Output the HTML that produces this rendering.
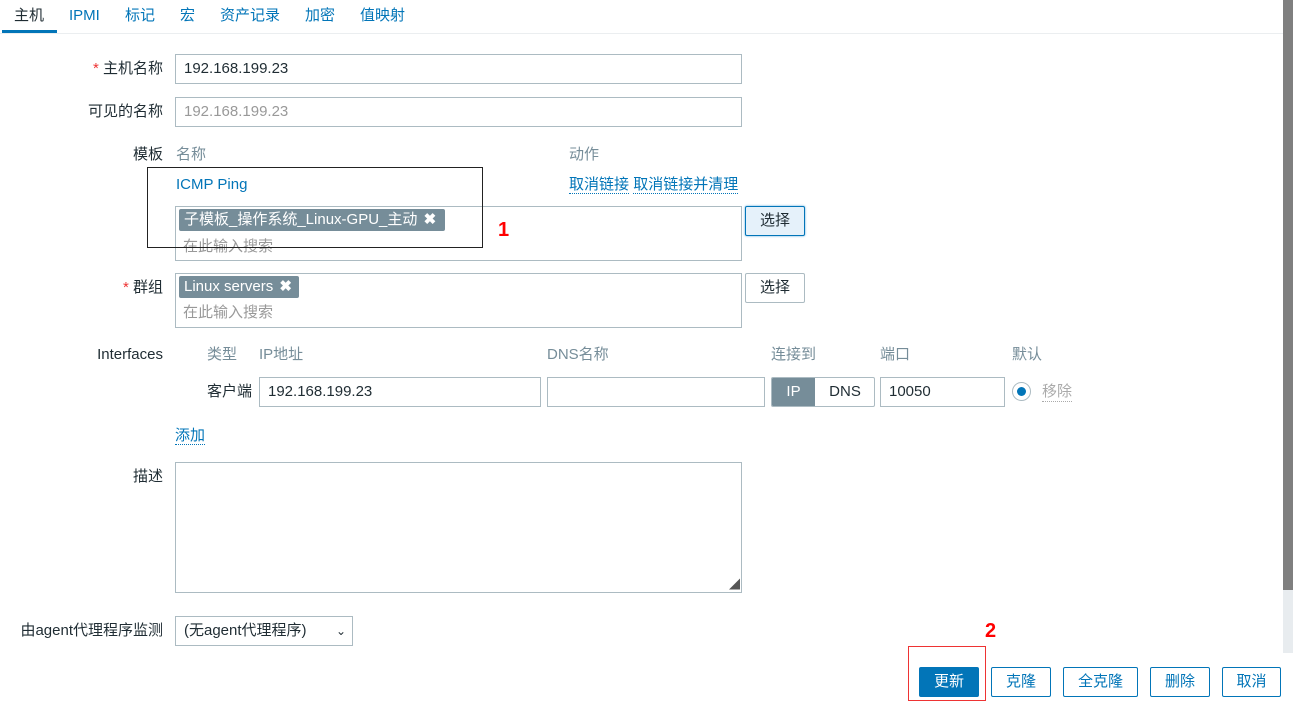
<!DOCTYPE html>
<html><head><meta charset="utf-8"><style>
*{box-sizing:border-box;margin:0;padding:0}
body{width:1293px;height:707px;position:relative;background:#fff;font-family:"Liberation Sans","Noto Sans CJK SC",sans-serif;font-size:15px;color:#1f2c33;overflow:hidden}
.a{position:absolute;white-space:nowrap;line-height:18px}
.lbl{position:absolute;right:1130px;white-space:nowrap;line-height:18px}
.in{position:absolute;border:1px solid #acbbc2;background:#fff;padding-left:8px;line-height:28px;height:30px}
.g{color:#768d99}
.lnk{color:#0275b8}
.dot{border-bottom:1px dotted #0275b8}
.tag{position:absolute;background:#768d99;color:#fff;border-radius:2px;height:22px;line-height:22px;padding-left:5px}
.btn{position:absolute;border:1px solid #0275b8;color:#0275b8;border-radius:2px;height:30px;line-height:28px;text-align:center;background:#fff}
.sb{position:absolute;border:1px solid #acbbc2;border-radius:2px;height:30px;line-height:28px;text-align:center;background:#fff}
.red{color:#e33}
</style></head><body>
<div class="a" style="left:14px;top:7px;">主机</div>
<div class="a lnk" style="left:69px;top:7px;">IPMI</div>
<div class="a lnk" style="left:125px;top:7px;">标记</div>
<div class="a lnk" style="left:180px;top:7px;">宏</div>
<div class="a lnk" style="left:220px;top:7px;">资产记录</div>
<div class="a lnk" style="left:305px;top:7px;">加密</div>
<div class="a lnk" style="left:360px;top:7px;">值映射</div>
<div style="position:absolute;left:0;top:33px;width:1283px;height:1px;background:#ebeef0"></div>
<div style="position:absolute;left:2px;top:30px;width:55px;height:3px;background:#0275b8"></div>

<div class="lbl" style="top:60px;"><span class="red">*</span> 主机名称</div>
<div class="in" style="left:175px;top:54px;width:567px;">192.168.199.23</div>
<div class="lbl" style="top:103px;">可见的名称</div>
<div class="in" style="left:175px;top:97px;width:567px;color:#999">192.168.199.23</div>

<div class="lbl" style="top:146px;">模板</div>
<div class="a g" style="left:176px;top:146px;">名称</div>
<div class="a g" style="left:569px;top:146px;">动作</div>
<div class="a lnk" style="left:176px;top:176px;">ICMP Ping</div>
<div class="a lnk" style="left:569px;top:176px;"><span class="dot">取消链接</span> <span class="dot">取消链接并清理</span></div>
<div class="in" style="left:175px;top:206px;width:567px;height:55px;"></div>
<div class="tag" style="left:179px;top:209px;width:266px;">子模板_操作系统_Linux-GPU_主动 <b style="margin-left:2px">✖</b></div>
<div class="a" style="left:183px;top:238px;color:#999">在此输入搜索</div>
<div class="sb" style="left:745px;top:206px;width:60px;background:#e5f1fa;border-color:#0275b8;box-shadow:0 0 2px #5aa9dd">选择</div>
<div style="position:absolute;left:147px;top:167px;width:336px;height:81px;border:1px solid #222"></div>
<div class="a" style="left:498px;top:219px;color:#f00;font-weight:bold;font-size:20px;line-height:22px">1</div>

<div class="lbl" style="top:279px;"><span class="red">*</span> 群组</div>
<div class="in" style="left:175px;top:273px;width:567px;height:55px;"></div>
<div class="tag" style="left:179px;top:276px;width:120px;">Linux servers <b style="margin-left:2px">✖</b></div>
<div class="a" style="left:183px;top:304px;color:#999">在此输入搜索</div>
<div class="sb" style="left:745px;top:273px;width:60px;">选择</div>

<div class="lbl" style="top:346px;">Interfaces</div>
<div class="a g" style="left:207px;top:346px;">类型</div>
<div class="a g" style="left:259px;top:346px;">IP地址</div>
<div class="a g" style="left:547px;top:346px;">DNS名称</div>
<div class="a g" style="left:771px;top:346px;">连接到</div>
<div class="a g" style="left:880px;top:346px;">端口</div>
<div class="a g" style="left:1012px;top:346px;">默认</div>
<div class="a" style="left:207px;top:383px;">客户端</div>
<div class="in" style="left:259px;top:377px;width:282px;">192.168.199.23</div>
<div class="in" style="left:547px;top:377px;width:218px;"></div>
<div style="position:absolute;left:771px;top:377px;width:104px;height:30px;border:1px solid #acbbc2;border-radius:2px;overflow:hidden">
<div style="position:absolute;left:0;top:0;width:43px;height:28px;background:#768d99;color:#fff;text-align:center;line-height:28px">IP</div>
<div style="position:absolute;left:43px;top:0;width:60px;height:28px;text-align:center;line-height:28px">DNS</div></div>
<div class="in" style="left:880px;top:377px;width:125px;">10050</div>
<div style="position:absolute;left:1012px;top:382px;width:19px;height:19px;border:1px solid #acbbc2;border-radius:50%"><div style="position:absolute;left:4px;top:4px;width:9px;height:9px;border-radius:50%;background:#0275b8"></div></div>
<div class="a" style="left:1042px;top:383px;color:#aaa;border-bottom:1px dotted #aaa">移除</div>
<div class="a lnk" style="left:175px;top:427px;"><span class="dot">添加</span></div>

<div class="lbl" style="top:468px;">描述</div>
<div class="in" style="left:175px;top:462px;width:567px;height:131px;"></div>
<div class="a" style="left:729px;top:576px;color:#555;font-size:11px">◢</div>

<div class="lbl" style="top:622px;">由agent代理程序监测</div>
<div class="in" style="left:175px;top:616px;width:178px;height:30px;">(无agent代理程序)<span style="position:absolute;right:6px;top:0;font-size:12px">&#8964;</span></div>

<div class="a" style="left:985px;top:620px;color:#f00;font-weight:bold;font-size:20px;line-height:22px">2</div>
<div style="position:absolute;left:908px;top:646px;width:78px;height:55px;border:1px solid #e33"></div>
<div class="btn" style="left:919px;top:667px;width:60px;background:#0275b8;color:#fff">更新</div>
<div class="btn" style="left:991px;top:667px;width:60px;">克隆</div>
<div class="btn" style="left:1063px;top:667px;width:75px;">全克隆</div>
<div class="btn" style="left:1150px;top:667px;width:60px;">删除</div>
<div class="btn" style="left:1222px;top:667px;width:59px;">取消</div>

<div style="position:absolute;left:1283px;top:0;width:10px;height:653px;background:#e8ecef"></div>
<div style="position:absolute;left:1283px;top:0;width:10px;height:590px;background:#7f7f7f"></div>
</body></html>
